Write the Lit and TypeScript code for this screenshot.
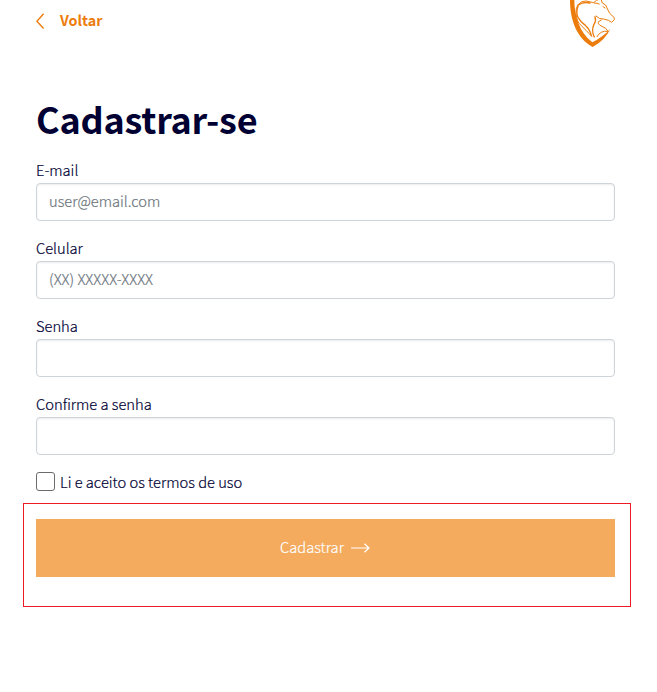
import { LitElement, html, css } from "lit";
import { customElement } from "lit/decorators.js";

@customElement("app-root")
export class AppRoot extends LitElement {
  static styles = css`
    :host { display: block; height: 692px; overflow: hidden; background: #fff; color: #000033;
      font: 300 14.7px/24px "Noto Sans CJK JP", "Noto Sans CJK SC", sans-serif; -webkit-text-stroke: .2px currentColor; }
    * { box-sizing: border-box; }
    .page { padding: 0 42px 0 36px; }
    header { display: flex; justify-content: space-between; height: 48px; }
    .back { display: flex; align-items: center; height: 39px; gap: 15px; color: #ec7c0c; font-size: 14.3px; font-weight: 700; text-decoration: none; -webkit-text-stroke: 0; }
    .chevron { display: block; width: 9px; height: 18px; margin-top: 3px; }
    .logo { display: block; width: 64px; height: 52px; margin-right: -9px; }
    h1 { margin: 46px 0 17px; font-size: 36px; line-height: 48px; font-weight: 700; letter-spacing: -.22px; -webkit-text-stroke: 0; }
    .field { display: block; height: 78px; }
    .caption { display: block; height: 24px; line-height: 21px; }
    .field input { display: block; width: 100%; height: 38px; padding: 0 12px 4px; border: 1px solid #ced4da; border-radius: 4px;
      box-shadow: inset 0 1px 2px rgba(0, 0, 0, .08); font: inherit; color: inherit; background: #fff; outline: none; }
    .field input::placeholder { color: #6c757d; opacity: 1; -webkit-text-stroke: .2px #6c757d; }
    .terms { display: flex; align-items: center; height: 24px; margin-top: -1px; gap: 5px; }
    .terms input { appearance: none; width: 19px; height: 19px; margin: 0 0 1px; border: 1px solid #6b6b6b; border-radius: 3px; background: #fff; }
    .frame { height: 104px; margin: 9px -16px 0 -13px; border: 1px solid #ed1c24; padding: 15px 15px 0 12px; }
    button { display: flex; width: 100%; height: 58px; align-items: center; justify-content: center; gap: 7px; border: 0; padding: 0 1px 0 0;
      background: #f4ab5e; color: #fff; font: inherit; -webkit-text-stroke: .2px #fff; }
    .action { margin-top: -2px; }
    .arrow { display: block; width: 19px; height: 10px; }
  `;

  private field(label: string, placeholder = "", type = "text") {
    return html`<label class="field"><span class="caption">${label}</span><input type=${type} placeholder=${placeholder}></label>`;
  }

  render() {
    return html`<div class="page">
      <header>
        <a class="back"><svg class="chevron" viewBox="0 0 9 18" fill="none" stroke="#ec7c0c" stroke-width="1.4"><path d="M7.6 1.8.9 9.2 7.6 16.5"/></svg><span>Voltar</span></a>
        <svg class="logo" viewBox="0 0 192 156" fill="none" stroke="#ec7c0c" stroke-linecap="round" stroke-linejoin="round">
          <path fill="#ec7c0c" stroke="none" d="M30 0H43C43 45 58 98 97 127Q127 112 151 87Q135 121 98 141C50 115 30 60 30 0Z"/>
          <path stroke-width="3" d="M54 14Q66 1 78 3L101 8Q108 0 119 -3M124 0L127 9 137 15 141 24 149 40 162 52 163 59 155 67 145 61 131 57Q118 59 108 48M54 14Q46 25 48 42Q50 66 64 77Q77 89 96 110M124 60Q107 66 120 76Q141 84 144 94Q121 91 111 110M129 20L135 24M103 9Q112 9 118 12"/>
          <path stroke-width="4" d="M55 15Q70 4 90 9M105 50Q109 62 102 73Q93 91 103 111M54 18Q47 38 54 52Q62 67 77 77Q88 86 94 106"/>
        </svg>
      </header>
      <h1>Cadastrar-se</h1>
      ${this.field("E-mail", "user@email.com")}
      ${this.field("Celular", "(XX) XXXXX-XXXX")}
      ${this.field("Senha", "", "password")}
      ${this.field("Confirme a senha", "", "password")}
      <label class="terms"><input type="checkbox"><span>Li e aceito os termos de uso</span></label>
      <div class="frame"><button type="button"><span class="action">Cadastrar</span><svg class="arrow" viewBox="0 0 19 10" fill="none" stroke="#fff" stroke-width="1.2"><path d="M0 5H18M13.5 .7 18 5 13.5 9.3"/></svg></button></div>
    </div>`;
  }
}
